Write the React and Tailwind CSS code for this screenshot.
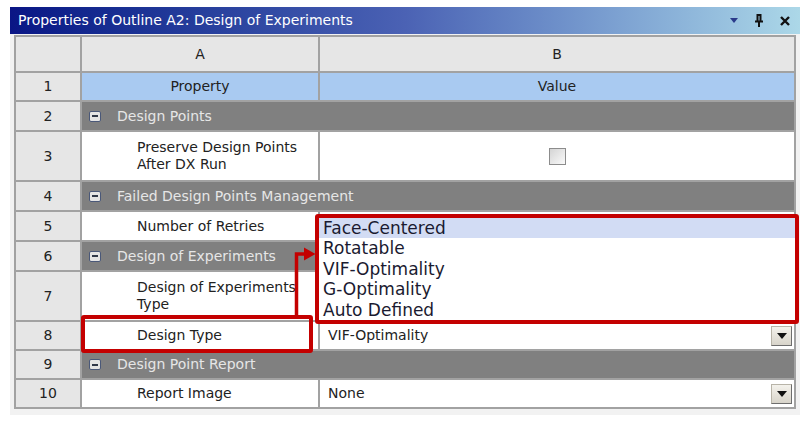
import React from 'react';

const font = { fontFamily: '"DejaVu Sans", Verdana, sans-serif' };

const rows = [
  { n: 1, type: 'head' },
  { n: 2, type: 'group', label: 'Design Points' },
  { n: 3, type: 'prop', label: ['Preserve Design Points', 'After DX Run'], value: 'checkbox' },
  { n: 4, type: 'group', label: 'Failed Design Points Management' },
  { n: 5, type: 'prop', label: ['Number of Retries'], value: '' },
  { n: 6, type: 'group', label: 'Design of Experiments' },
  { n: 7, type: 'prop', label: ['Design of Experiments', 'Type'], value: '' },
  { n: 8, type: 'prop', label: ['Design Type'], value: 'VIF-Optimality', combo: true },
  { n: 9, type: 'group', label: 'Design Point Report' },
  { n: 10, type: 'prop', label: ['Report Image'], value: 'None', combo: true },
];

const options = ['Face-Centered', 'Rotatable', 'VIF-Optimality', 'G-Optimality', 'Auto Defined'];

function MinusBox() {
  return (
    <span className="flex h-[11px] w-[12px] items-center justify-center rounded-[2px] border border-[#4a5878] bg-[#e4e4e4]">
      <span className="h-[2px] w-[6px] bg-[#303848]" />
    </span>
  );
}

function ComboButton() {
  return (
    <span className="flex h-[20px] w-[21px] items-center justify-center border border-[#b8b4a8] border-b-[#6e6e6e] border-r-[#6e6e6e] bg-gradient-to-b from-[#f4f2ec] to-[#d8d4ca]">
      <svg width="10" height="6" viewBox="0 0 10 6">
        <path d="M0 0 H10 L5 6 Z" fill="#111" />
      </svg>
    </span>
  );
}

function Checkbox() {
  return <span className="block h-[17px] w-[17px] border border-[#8c8c8c] bg-gradient-to-br from-[#d4d4d4] to-[#fafafa]" />;
}

export default function App() {
  return (
    <div className="relative h-[422px] w-[808px] overflow-hidden bg-white text-[14px] text-[#222]" style={font}>
      <div className="ml-[10px] mt-[7px] w-[790px]">
        {/* title bar */}
        <div className="flex h-[27px] items-center bg-gradient-to-r from-[#0a1585] via-[#4b62b4] to-[#acd8e8] pl-[8px] pr-[10px]">
          <span className="text-[14px] text-white">Properties of Outline A2: Design of Experiments</span>
          <div className="ml-auto flex items-center gap-[16px]">
            <svg width="8" height="5" viewBox="0 0 8 5">
              <path d="M0 0 H8 L4 5 Z" fill="#2a3a8a" />
            </svg>
            <svg width="10" height="13" viewBox="0 0 10 13">
              <path d="M2.5 1 H7.5 M3.5 1 V7 M6.5 1 V7 M1 7.5 H9 M5 7.5 V13" stroke="#111" strokeWidth="2" fill="none" />
            </svg>
            <svg width="10" height="10" viewBox="0 0 10 10">
              <path d="M1 1 L9 9 M9 1 L1 9" stroke="#111" strokeWidth="2.4" />
            </svg>
          </div>
        </div>

        {/* grid */}
        <div className="bg-[#f2f2f2] pb-[6px] pl-[4px] pt-[1px]">
          <div className="grid w-[782px] grid-cols-[64px_236px_474px] grid-rows-[34px_27px_28px_48px_28px_28px_28px_48px_27px_27px_27px] gap-[2px] bg-[#a2a2a2] p-[2px]">
            <div className="bg-[#e6e6e6]" />
            <div className="flex items-center justify-center bg-[#e6e6e6]">A</div>
            <div className="flex items-center justify-center bg-[#e6e6e6]">B</div>

            {rows.map((r) => (
              <React.Fragment key={r.n}>
                <div className="flex items-center justify-center bg-[#e6e6e6]">{r.n}</div>
                {r.type === 'head' && (
                  <>
                    <div className="flex items-center justify-center bg-[#a9caf1]">Property</div>
                    <div className="flex items-center justify-center bg-[#a9caf1]">Value</div>
                  </>
                )}
                {r.type === 'group' && (
                  <div className="col-span-2 flex items-center bg-[#808080] pl-[7px] text-[#e6e6e6]">
                    <MinusBox />
                    <span className="ml-[16px]">{r.label}</span>
                  </div>
                )}
                {r.type === 'prop' && (
                  <>
                    <div className="flex flex-col justify-center bg-white pl-[55px] leading-[17px]">
                      {r.label.map((l) => (
                        <span key={l} className="whitespace-nowrap">{l}</span>
                      ))}
                    </div>
                    <div className="flex items-center bg-white pl-[8px] pr-[2px]">
                      {r.value === 'checkbox' ? (
                        <div className="flex w-full justify-center pr-[6px]">
                          <Checkbox />
                        </div>
                      ) : (
                        <span>{r.value}</span>
                      )}
                      {r.combo && (
                        <span className="ml-auto">
                          <ComboButton />
                        </span>
                      )}
                    </div>
                  </>
                )}
              </React.Fragment>
            ))}
          </div>
        </div>
      </div>

      {/* dropdown list callout */}
      <div className="absolute left-[315px] top-[214px] h-[110px] w-[484px] rounded-[3px] border-[4px] border-[#c40000] bg-white text-[17px] leading-[20.4px] text-[#1a1a30]">
        {options.map((o, i) => (
          <div key={o} className={`pl-[4px] ${i === 0 ? 'bg-[#d2dcf4]' : ''}`}>
            {o}
          </div>
        ))}
      </div>

      {/* highlight around Design Type */}
      <div className="absolute left-[81px] top-[315px] h-[38px] w-[232px] rounded-[3px] border-[4px] border-[#c40000]" />

      {/* connector arrow */}
      <svg className="absolute left-[290px] top-[244px]" width="28" height="74" viewBox="0 0 28 74">
        <path d="M6.5 74 V10 H16" stroke="#c40000" strokeWidth="3.5" fill="none" />
        <path d="M14 3.5 L25.5 10 L14 16.5 Z" fill="#c40000" />
      </svg>
    </div>
  );
}
